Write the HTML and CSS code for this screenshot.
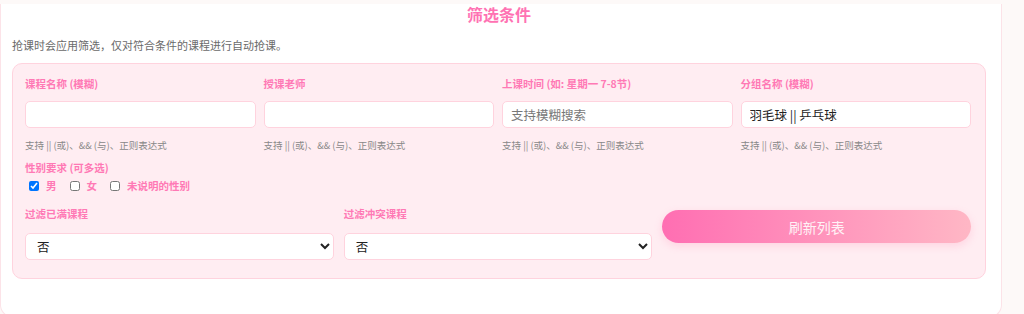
FILE: index.html
```html
<!DOCTYPE html>
<html lang="zh-CN">
<head>
<meta charset="UTF-8">
<meta name="viewport" content="width=device-width, initial-scale=1.0">
<title>筛选条件</title>
<link rel="stylesheet" href="styles.css">
</head>
<body>
<div class="card">
  <h2 class="title">筛选条件</h2>
  <p class="desc">抢课时会应用筛选，仅对符合条件的课程进行自动抢课。</p>

  <div class="panel">
    <div class="grid4">
      <div class="field">
        <label class="label">课程名称 (模糊)</label>
        <input class="input" type="text">
        <div class="hint">支持 || (或)、&amp;&amp; (与)、正则表达式</div>
      </div>
      <div class="field">
        <label class="label">授课老师</label>
        <input class="input" type="text">
        <div class="hint">支持 || (或)、&amp;&amp; (与)、正则表达式</div>
      </div>
      <div class="field">
        <label class="label">上课时间 (如: 星期一 7-8节)</label>
        <input class="input" type="text" placeholder="支持模糊搜索">
        <div class="hint">支持 || (或)、&amp;&amp; (与)、正则表达式</div>
      </div>
      <div class="field">
        <label class="label">分组名称 (模糊)</label>
        <input class="input" type="text" value="羽毛球 || 乒乓球">
        <div class="hint">支持 || (或)、&amp;&amp; (与)、正则表达式</div>
      </div>
    </div>

    <div class="gender">
      <label class="label">性别要求 (可多选)</label>
      <div class="checks">
        <label class="check"><input type="checkbox" checked> 男</label>
        <label class="check"><input type="checkbox"> 女</label>
        <label class="check"><input type="checkbox"> 未说明的性别</label>
      </div>
    </div>

    <div class="grid3">
      <div class="field">
        <label class="label">过滤已满课程</label>
        <select class="select">
          <option>否</option>
          <option>是</option>
        </select>
      </div>
      <div class="field">
        <label class="label">过滤冲突课程</label>
        <select class="select">
          <option>否</option>
          <option>是</option>
        </select>
      </div>
      <div class="field">
        <button class="refresh-btn">刷新列表</button>
      </div>
    </div>
  </div>
</div>
</body>
</html>
```

FILE: styles.css
```css
body {
  margin: 0;
  background: #fdf9f8;
  font-family: "Noto Sans CJK SC", "Noto Sans", sans-serif;
}
.card {
  box-sizing: border-box;
  width: 1002px;
  height: 313px;
  background: #fff;
  border: 1px solid #fce3e8;
  border-top: none;
  border-radius: 0 0 12px 12px;
  padding: 0 15px 0 11px;
}
.title {
  margin: 4px 0 0;
  font-size: 16px;
  line-height: 20px;
  font-weight: bold;
  text-align: center;
  color: #ff72b3;
}
.desc {
  margin: 12px 0 0;
  font-size: 11px;
  line-height: 18px;
  color: #6a6a6a;
}
.panel {
  margin-top: 9px;
  background: #ffedf2;
  border: 1px solid #ffd3de;
  border-radius: 10px;
  padding: 13px 14px 18px 12px;
}
.grid4 {
  display: grid;
  grid-template-columns: repeat(4, 1fr);
  gap: 8px;
}
.grid3 {
  display: grid;
  grid-template-columns: repeat(3, 1fr);
  gap: 10px;
  margin-top: 13px;
}
.field {
  display: flex;
  flex-direction: column;
}
.label {
  display: block;
  font-size: 10.5px;
  line-height: 14px;
  font-weight: bold;
  color: #ff79b5;
}
.input,
.select {
  box-sizing: border-box;
  height: 27px;
  margin-top: 10px;
  background: #fff;
  border: 1px solid #ffd3de;
  border-radius: 5px;
  font-family: inherit;
  font-size: 12.5px;
  color: #222;
  padding: 0 8px;
  outline: none;
}
.input::placeholder {
  color: #777;
}
.select {
  margin-top: 12px;
  padding-left: 7px;
}
.hint {
  margin-top: 10px;
  font-size: 9.5px;
  line-height: 14px;
  color: #888;
}
.gender {
  margin-top: 9px;
}
.checks {
  display: flex;
  gap: 13px;
  margin-top: 3px;
  padding-left: 4px;
  line-height: 16px;
}
.check {
  display: flex;
  align-items: center;
  gap: 7px;
  font-size: 10.5px;
  line-height: 16px;
  font-weight: bold;
  color: #ff79b5;
}
.check input {
  margin: 0;
  width: 10px;
  height: 10px;
}
.refresh-btn {
  margin-top: 3px;
  height: 33px;
  border: none;
  border-radius: 17px;
  background: linear-gradient(90deg, #ff6eb2, #ffb7c5);
  color: #fff2f6;
  font-family: inherit;
  font-size: 14px;
  box-shadow: 0 3px 8px rgba(255, 110, 160, 0.2);
  cursor: pointer;
}
```
